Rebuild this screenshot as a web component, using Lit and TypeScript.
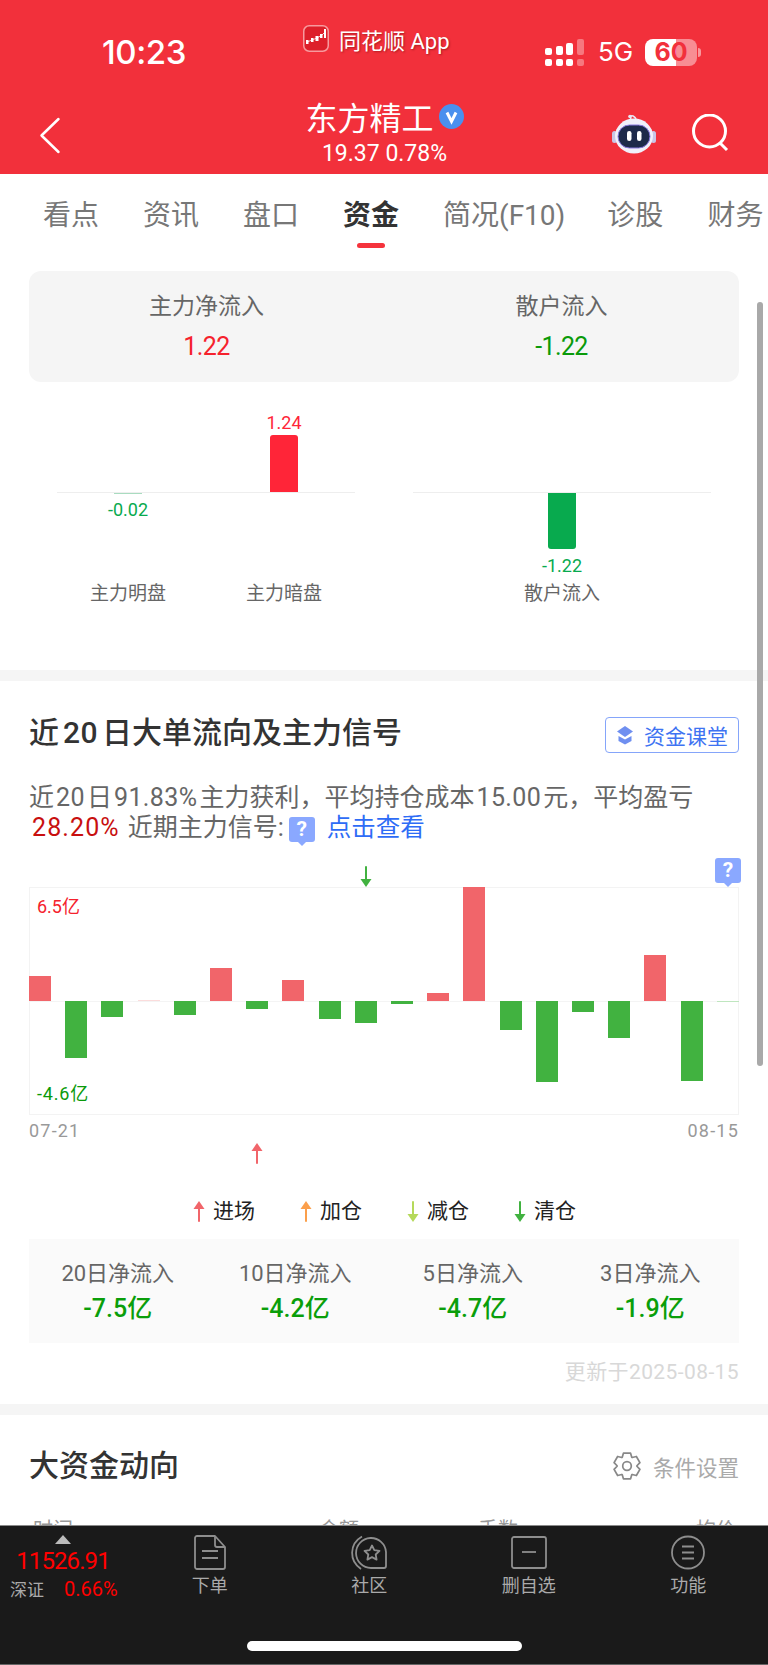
import { LitElement, css, html, svg } from 'lit';
import { customElement } from 'lit/decorators.js';

const RED = '#f1656a';
const GREEN = '#41b240';

// daily net flow, in px of bar height (positive goes up)
const FLOWS = [25, -57, -16, 1.5, -14, 33, -8, 21, -18, -22, -3, 8, 114, -29, -81, -11, -37, 46, -80, -1];

const STATS = [
  ['20日净流入', '-7.5亿'],
  ['10日净流入', '-4.2亿'],
  ['5日净流入', '-4.7亿'],
  ['3日净流入', '-1.9亿'],
];

const arrow = (color: string, up: boolean) => html`
  <svg class="arrow" width="12" height="21" viewBox="0 0 12 21">
    ${up
      ? svg`<path d="M6 7V20" stroke=${color} stroke-width="2" stroke-linecap="round"/><path d="M6 0L11.5 8H.5Z" fill=${color}/>`
      : svg`<path d="M6 1V14" stroke=${color} stroke-width="2" stroke-linecap="round"/><path d="M6 21L11.5 13H.5Z" fill=${color}/>`}
  </svg>`;

// six tooth gear outline around (13,13)
const gearPath = () => {
  const pts: string[] = [];
  for (let i = 0; i < 6; i++) {
    const a = (i * Math.PI) / 3 - Math.PI / 2;
    const at = (r: number, d: number) => {
      const x = 13 + r * Math.cos(a + d);
      const y = 13 + r * Math.sin(a + d);
      return `${x.toFixed(2)} ${y.toFixed(2)}`;
    };
    pts.push(`${i ? 'L' : 'M'}${at(9.2, -0.5)}`, `L${at(12.4, -0.27)}`, `L${at(12.4, 0.27)}`, `L${at(9.2, 0.5)}`);
  }
  return pts.join(' ') + 'Z';
};

@customElement('app-root')
export class AppRoot extends LitElement {
  static styles = css`
    :host {
      display: flex;
      flex-direction: column;
      position: relative;
      width: 768px;
      height: 1665px;
      overflow: hidden;
      background: #fff;
      font-family: Roboto, 'Noto Sans CJK SC', sans-serif;
      color: #666;
    }

    /* header */
    .header {
      height: 174px;
      flex: none;
      background: #f2303b;
      color: #fff;
    }
    .status {
      height: 78px;
      display: flex;
      align-items: center;
      padding: 26px 0 0 102px;
      box-sizing: border-box;
    }
    .time {
      width: 201px;
      font: 500 33px/52px Inter, sans-serif;
      letter-spacing: -0.4px;
    }
    .app {
      width: 242px;
      display: flex;
      align-items: center;
      gap: 10px;
      height: 27px;
      margin-top: -27px;
      font-size: 22px;
      text-shadow: 1px 1px 2px rgba(90, 0, 0, 0.45);
    }
    .signal {
      display: grid;
      grid-template-columns: repeat(4, 7px);
      grid-template-rows: 16px 7px;
      column-gap: 3.7px;
      row-gap: 4px;
      width: 39px;
    }
    .signal i {
      display: block;
      background: #fff;
      border-radius: 2px;
      align-self: end;
      height: 7px;
    }
    .signal i.s2 {
      height: 9px;
    }
    .signal i.s3 {
      height: 12px;
    }
    .signal i.s4 {
      height: 16px;
    }
    .signal i.off {
      background: rgba(255, 255, 255, 0.35);
    }
    .net {
      margin-left: 14px;
      width: 47px;
      font: 400 26px/1 Inter, sans-serif;
    }
    .battery {
      position: relative;
      width: 52px;
      height: 27px;
      border-radius: 8px;
      background: linear-gradient(90deg, #fff 0 60%, rgba(255, 255, 255, 0.45) 60%);
      color: #f2303b;
      font: 700 25px/27px Inter, sans-serif;
      text-align: center;
    }
    .battery::after {
      content: '';
      position: absolute;
      left: 53px;
      top: 9px;
      width: 3px;
      height: 9px;
      border-radius: 0 3px 3px 0;
      background: rgba(255, 255, 255, 0.5);
    }
    .nav {
      display: grid;
      grid-template-columns: 230px 308px 230px;
      height: 96px;
    }
    .back {
      padding: 39px 0 0 39px;
    }
    .name {
      display: flex;
      flex-direction: column;
      align-items: center;
      padding: 20px 0 0 1px;
    }
    .name h1 {
      display: flex;
      align-items: center;
      gap: 5px;
      margin: 0 0 7px;
      font: 400 32px/36px 'Noto Sans CJK SC', sans-serif;
    }
    .name p {
      margin: 0;
      font: 400 23px/26px Roboto, sans-serif;
    }
    .acts {
      display: flex;
      justify-content: flex-end;
      align-items: flex-start;
      gap: 33px;
      padding: 36px 38px 0 0;
    }
    .acts svg:first-child {
      margin-left: -3px;
      margin-right: 3px;
    }

    /* main scroller */
    .main {
      flex: 1;
      min-height: 0;
      overflow: hidden;
    }
    .tabs {
      display: flex;
      gap: 44px;
      padding: 22px 0 0 43px;
      margin-bottom: 23px;
      white-space: nowrap;
      font-size: 28px;
      line-height: 40px;
      color: #777;
    }
    .tabs div {
      display: flex;
      flex-direction: column;
      align-items: center;
      flex: none;
    }
    .tabs div:nth-child(5) {
      margin-right: -2px;
    }
    .tabs .on {
      color: #333;
      font-weight: 700;
    }
    .tabs .on::after {
      content: '';
      width: 28px;
      height: 5px;
      margin-top: 7px;
      border-radius: 3px;
      background: #f5333c;
    }
    .summary {
      display: grid;
      grid-template-columns: 1fr 1fr;
      margin: 0 29px;
      height: 111px;
      border-radius: 12px;
      background: #f5f5f5;
      text-align: center;
    }
    .summary span {
      display: block;
      margin-top: 21px;
      font-size: 23px;
      line-height: 30px;
    }
    .summary b {
      display: block;
      margin-top: 9px;
      font-size: 25px;
      font-weight: 400;
      line-height: 32px;
      letter-spacing: -0.6px;
    }
    .red {
      color: #f5222d;
    }
    .green {
      color: #0a9a0a;
    }

    .flows {
      display: flex;
      gap: 58px;
      padding: 20px 0 0 57px;
      height: 288px;
      box-sizing: border-box;
    }
    .group {
      width: 298px;
    }
    .cols {
      display: grid;
      grid-template-columns: repeat(2, 142px);
      column-gap: 14px;
      text-align: center;
      font-size: 18px;
      line-height: 24px;
    }
    .group.one .cols {
      grid-template-columns: 1fr;
    }
    .cols.up {
      height: 90px;
      align-items: end;
      color: #ff2538;
    }
    .cols.down {
      height: 85px;
      align-items: start;
      color: #08aa4e;
    }
    .cols.names {
      margin-top: 2px;
      font-size: 19px;
      line-height: 28px;
      color: #666;
    }
    .axis {
      height: 1px;
      background: #eee;
    }
    .bar {
      width: 28px;
      margin: 0 auto;
    }
    .bar.r {
      height: 57px;
      border-radius: 3px 3px 0 0;
      background: #ff2538;
    }
    .bar.g {
      height: 56px;
      margin-bottom: 5px;
      border-radius: 0 0 3px 3px;
      background: #08aa4e;
    }
    .bar.thin {
      height: 1px;
      margin-bottom: 4px;
      background: #a9dcc0;
    }
    .band {
      height: 11px;
      background: #f5f5f5;
    }

    /* signal section */
    .sec {
      padding: 36px 29px 0;
    }
    .head {
      display: flex;
      justify-content: space-between;
      align-items: center;
      height: 36px;
    }
    h2 {
      margin: 0 0 4px;
      font-size: 30px;
      font-weight: 500;
      line-height: 36px;
      color: #333;
    }
    h2 i {
      font-style: normal;
      margin: 0 4px;
      letter-spacing: 0.5px;
    }
    .course {
      display: flex;
      align-items: center;
      gap: 11px;
      width: 134px;
      height: 36px;
      padding-left: 11px;
      box-sizing: border-box;
      border: 1.5px solid #85a5fa;
      border-radius: 4px;
      font-size: 21px;
      color: #3e73f2;
    }
    .para {
      margin: 30px 0 0;
      font-size: 25px;
      line-height: 30px;
      color: #666;
      white-space: nowrap;
    }
    .para i {
      font-style: normal;
      margin: 0 2px;
      letter-spacing: 0.4px;
    }
    .para .pct {
      color: #c80f0f;
      margin: 0 8px 0 3px;
      letter-spacing: 1.1px;
    }
    .para .link {
      color: #2e6cf6;
      margin-left: 12px;
      font-size: 24.5px;
    }
    .ask {
      position: relative;
      display: inline-block;
      width: 26px;
      height: 25px;
      border-radius: 3px;
      background: #8aa8ff;
      color: #fff;
      font: 700 21px/25px Roboto, sans-serif;
      text-align: center;
      vertical-align: 0;
      margin-left: 5px;
    }
    .ask::after {
      content: '';
      position: absolute;
      left: 9px;
      top: 25px;
      border: 4px solid transparent;
      border-top-color: #8aa8ff;
      border-bottom: 0;
    }
    .plot {
      position: relative;
      margin-top: 44px;
    }
    .box {
      display: flex;
      justify-content: space-between;
      position: relative;
      height: 228px;
      background: linear-gradient(#f4f4f4, #f4f4f4) 0 114px / 100% 1px no-repeat;
      box-shadow: inset 0 0 0 1px #f3f3f3;
    }
    .col {
      display: flex;
      flex-direction: column;
      width: 22px;
    }
    .col > div {
      flex: 1;
      display: flex;
    }
    .col > div:first-child {
      align-items: flex-end;
    }
    .col span {
      width: 100%;
      display: block;
    }
    .tag {
      position: absolute;
      left: 8px;
      font-size: 18px;
      line-height: 24px;
    }
    .tag.hi {
      top: 8px;
    }
    .tag.lo {
      top: 195px;
      letter-spacing: 0.8px;
    }
    .mark {
      position: absolute;
      line-height: 0;
    }
    .mark.sell {
      left: 331px;
      top: -21px;
    }
    .mark.buy {
      left: 222px;
      top: 256px;
    }
    .plot .ask {
      position: absolute;
      right: -2px;
      top: -29px;
    }
    .dates {
      display: flex;
      justify-content: space-between;
      margin-top: 4px;
      font-size: 18px;
      line-height: 24px;
      letter-spacing: 1.2px;
      color: #999;
    }
    .legend {
      display: flex;
      margin: 53px 0 0 164px;
      gap: 24px;
      font-size: 21px;
      line-height: 30px;
      color: #222;
    }
    .legend div {
      display: flex;
      align-items: center;
      gap: 8px;
      width: 83px;
    }
    .stats {
      display: grid;
      grid-template-columns: repeat(4, 1fr);
      height: 104px;
      margin-top: 13px;
      background: #fafafa;
      text-align: center;
    }
    .stats span {
      display: block;
      margin-top: 21px;
      font-size: 22px;
      line-height: 28px;
      color: #666;
    }
    .stats b {
      display: block;
      margin-top: 4px;
      font-size: 25px;
      font-weight: 500;
      line-height: 34px;
      color: #0a9e0a;
    }
    .updated {
      margin-top: 16px;
      padding-bottom: 19px;
      text-align: right;
      font-size: 21px;
      line-height: 26px;
      letter-spacing: 0.4px;
      color: #d8d8d8;
    }

    /* big money */
    .big {
      padding: 33px 29px 0;
    }
    .big h2 {
      margin: 0;
    }
    .cond {
      display: flex;
      align-items: center;
      gap: 12px;
      font-size: 21.5px;
      color: #aaa;
    }
    .thead {
      display: grid;
      grid-template-columns: 286px 159px 218px 60px;
      margin: 32px 0 0 4px;
      font-size: 20px;
      line-height: 28px;
      white-space: nowrap;
      color: #999;
    }

    /* footer */
    .foot {
      flex: none;
      height: 140px;
      box-sizing: border-box;
      border-top: 1px solid #8a8a8a;
      border-bottom: 1px solid #666;
      background: #1a1a1a;
      color: #aaa;
    }
    .bar-row {
      display: grid;
      grid-template-columns: 130px repeat(4, 159.5px);
      height: 115px;
    }
    .quote {
      padding: 9px 0 0 10px;
    }
    .tri {
      width: 0;
      margin-left: 45px;
      border: 8px solid transparent;
      border-top: 0;
      border-bottom: 9px solid #bbb;
    }
    .idx {
      width: 106px;
      text-align: center;
      color: #f00;
      font-size: 24px;
      line-height: 28px;
      letter-spacing: -0.9px;
      margin-top: 3px;
    }
    .mkt {
      display: flex;
      align-items: baseline;
      gap: 20px;
      font-size: 17px;
      line-height: 26px;
      margin-top: 1px;
    }
    .mkt b {
      font-size: 20px;
      font-weight: 400;
      color: #f00;
    }
    .item {
      display: flex;
      flex-direction: column;
      align-items: center;
      padding-top: 9px;
      font-size: 18px;
      line-height: 24px;
    }
    .item svg {
      display: block;
      height: 35px;
      margin-bottom: 4px;
    }
    .home {
      width: 275px;
      height: 10px;
      margin: 0 0 0 247px;
      border-radius: 5px;
      background: #fff;
    }
    .scroll {
      position: absolute;
      left: 757px;
      top: 302px;
      width: 6px;
      height: 764px;
      border-radius: 3px;
      background: #a9a9a9;
    }
  `;

  render() {
    return html`
      <div class="header">
        <div class="status">
          <div class="time">10:23</div>
          <div class="app">
            <svg width="26" height="27" viewBox="0 0 26 27">
              <rect x=".75" y=".75" width="24.500" height="25.500" rx="5.500" fill="#dd1f2a" stroke="#f79a9e" stroke-width="1.500"/>
              <path d="M4 17l5-2 5-2 5-3 3-3" fill="none" stroke="#f9c7c9" stroke-width="1"/>
              <g fill="#fff">
                <rect x="3" y="15" width="2.500" height="4"/><rect x="8" y="13" width="2.500" height="4"/>
                <rect x="12.500" y="11" width="3" height="5"/><rect x="17" y="9" width="2.500" height="4"/>
                <rect x="21" y="4" width="2" height="9"/>
              </g>
            </svg>
            同花顺 App
          </div>
          <div class="signal">
            <i></i><i class="s2"></i><i class="s3"></i><i class="s4 off"></i>
            <i></i><i></i><i></i><i class="off"></i>
          </div>
          <div class="net">5G</div>
          <div class="battery">60</div>
        </div>
        <div class="nav">
          <div class="back">
            <svg width="22" height="37" viewBox="0 0 22 37"><path d="M19.500 2L2.500 18.500 19.500 35" fill="none" stroke="#fff" stroke-width="2.500" stroke-linecap="round" stroke-linejoin="round"/></svg>
          </div>
          <div class="name">
            <h1>东方精工
              <svg width="25" height="25" viewBox="0 0 25 25"><circle cx="12.500" cy="12.500" r="12.500" fill="#4a90ee"/><path d="M8 8.500l4.500 9 4.500-9" fill="none" stroke="#fff" stroke-width="3"/></svg>
            </h1>
            <p>19.37 0.78%</p>
          </div>
          <div class="acts">
            <svg width="44" height="40" viewBox="0 0 44 40">
              <path d="M19 6c-1-3 0-5 2-4s3 2 3 4" fill="none" stroke="#e8e6f4" stroke-width="1.500"/>
              <circle cx="18" cy="2.500" r="1.800" fill="#e8e6f4"/>
              <rect x="0" y="17" width="5" height="12" rx="2.500" fill="#c9c5e6"/>
              <rect x="39" y="17" width="5" height="12" rx="2.500" fill="#c9c5e6"/>
              <ellipse cx="22" cy="22" rx="19" ry="17.500" fill="#f1f0fa"/>
              <rect x="6" y="11" width="32" height="23" rx="11.500" fill="#1e2a4a" stroke="#8b7be0" stroke-width="1"/>
              <rect x="15" y="17" width="4.500" height="10" rx="2.200" fill="#fff"/>
              <rect x="25" y="17" width="4.500" height="10" rx="2.200" fill="#fff"/>
            </svg>
            <svg width="38" height="38" viewBox="0 0 38 38"><circle cx="17.500" cy="17" r="16" fill="none" stroke="#fff" stroke-width="3"/><path d="M28 29l7 7" stroke="#fff" stroke-width="3"/></svg>
          </div>
        </div>
      </div>

      <div class="main">
        <div class="tabs">
          <div>看点</div><div>资讯</div><div>盘口</div><div class="on">资金</div><div>简况(F10)</div><div>诊股</div><div>财务</div>
        </div>
        <div class="summary">
          <div><span>主力净流入</span><b class="red">1.22</b></div>
          <div><span>散户流入</span><b class="green">-1.22</b></div>
        </div>
        <div class="flows">
          <div class="group">
            <div class="cols up"><div></div><div>1.24<div class="bar r"></div></div></div>
            <div class="axis"></div>
            <div class="cols down"><div><div class="bar thin"></div>-0.02</div><div></div></div>
            <div class="cols names"><div>主力明盘</div><div>主力暗盘</div></div>
          </div>
          <div class="group one">
            <div class="cols up"></div>
            <div class="axis"></div>
            <div class="cols down"><div><div class="bar g"></div>-1.22</div></div>
            <div class="cols names"><div>散户流入</div></div>
          </div>
        </div>
        <div class="band"></div>

        <div class="sec">
          <div class="head">
            <h2>近<i>20</i>日大单流向及主力信号</h2>
            <div class="course">
              <svg width="16" height="19" viewBox="0 0 16 19"><path d="M8 0l8 5.500-8 5.500-8-5.500z" fill="#6f8ff0"/><path d="M1.500 10v5l6.500 3.500 6.500-3.500v-5L8 13.500z" fill="#6f8ff0"/></svg>
              资金课堂
            </div>
          </div>
          <p class="para">近<i>20</i>日<i>91.83%</i>主力获利，平均持仓成本<i>15.00</i>元，平均盈亏<br /><span class="pct">28.20%</span>近期主力信号:<span class="ask">?</span><span class="link">点击查看</span></p>
          <div class="plot">
            <div class="box">
              ${FLOWS.map((v) => {
                const pale = Math.abs(v) < 2;
                const up = v > 0;
                const color = pale ? (up ? '#fbdcdc' : '#bfe6bf') : up ? RED : GREEN;
                const bar = html`<span style="height:${Math.abs(v)}px;background:${color}"></span>`;
                return html`<div class="col"><div>${up ? bar : ''}</div><div>${up ? '' : bar}</div></div>`;
              })}
              <div class="tag hi red">6.5亿</div>
              <div class="tag lo green">-4.6亿</div>
            </div>
            <div class="mark sell">${arrow(GREEN, false)}</div>
            <div class="mark buy">${arrow(RED, true)}</div>
            <span class="ask">?</span>
            <div class="dates"><span>07-21</span><span>08-15</span></div>
          </div>
          <div class="legend">
            <div>${arrow(RED, true)}进场</div>
            <div>${arrow('#fb9f4b', true)}加仓</div>
            <div>${arrow('#b5d95a', false)}减仓</div>
            <div>${arrow(GREEN, false)}清仓</div>
          </div>
          <div class="stats">
            ${STATS.map(([k, v]) => html`<div><span>${k}</span><b>${v}</b></div>`)}
          </div>
          <div class="updated">更新于2025-08-15</div>
        </div>
        <div class="band"></div>

        <div class="big">
          <div class="head">
            <h2>大资金动向</h2>
            <div class="cond">
              <svg width="28" height="28" viewBox="0 0 26 26" fill="none" stroke="#888" stroke-width="1.600" stroke-linejoin="round">
                <circle cx="13" cy="13" r="4"/>
                <path d=${gearPath()}/>
              </svg>
              条件设置
            </div>
          </div>
          <div class="thead"><span>时间</span><span>金额</span><span>手数</span><span>均价</span></div>
        </div>
      </div>

      <div class="foot">
        <div class="bar-row">
          <div class="quote">
            <div class="tri"></div>
            <div class="idx">11526.91</div>
            <div class="mkt"><span>深证</span><b>0.66%</b></div>
          </div>
          <div class="item">
            <svg width="32" viewBox="0 0 32 35" fill="none" stroke="#8e8e8e" stroke-width="1.800" stroke-linejoin="round">
              <path d="M3 1h18l10 11v20a2 2 0 0 1-2 2H3a2 2 0 0 1-2-2V3a2 2 0 0 1 2-2z"/><path d="M21 1v9a2 2 0 0 0 2 2h8"/><path d="M8 16h16M8 23h16"/>
            </svg>
            下单
          </div>
          <div class="item">
            <svg width="38" viewBox="0 0 38 35" fill="none" stroke="#8e8e8e" stroke-width="1.800" stroke-linejoin="round">
              <path d="M12 1.500C-1 9-1 26 11 34"/>
              <path d="M21 33A15 15 0 1 1 36 17V31a2 2 0 0 1-2 2Z"/>
              <path d="M22 10.500l2.300 4.700 5.200.7-3.800 3.600.9 5.100-4.600-2.500-4.600 2.500.9-5.100-3.800-3.600 5.200-.7z"/>
            </svg>
            社区
          </div>
          <div class="item">
            <svg width="36" viewBox="0 0 36 35" fill="none" stroke="#8e8e8e" stroke-width="1.800">
              <rect x="1" y="2" width="34" height="31" rx="2"/><path d="M11 17h14"/>
            </svg>
            删自选
          </div>
          <div class="item">
            <svg width="34" viewBox="0 0 34 35" fill="none" stroke="#8e8e8e" stroke-width="1.800">
              <circle cx="17" cy="17.500" r="16"/><path d="M11 11.500h12M11 17.500h12M11 23.500h12"/>
            </svg>
            功能
          </div>
        </div>
        <div class="home"></div>
      </div>
      <div class="scroll"></div>
    `;
  }
}
